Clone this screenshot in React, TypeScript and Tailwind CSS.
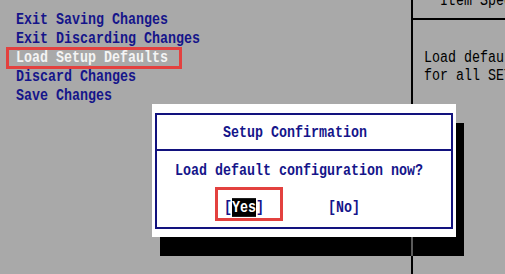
import React from "react";

const mono = { fontFamily: '"Liberation Mono", "DejaVu Sans Mono", monospace' };

function Line({ children, className = "" }: { children: React.ReactNode; className?: string }) {
  return (
    <div className={`h-[19px] leading-[19px] whitespace-pre scale-y-125 ${className}`}>{children}</div>
  );
}

export default function App() {
  return (
    <div
      className="relative w-[505px] h-[274px] overflow-hidden bg-[#a9a9a9] text-[13.333px] font-bold text-[#15158a] flex"
      style={mono}
    >
      {/* Left menu */}
      <div className="w-[411px] shrink-0 pt-[10px] pl-[16px] flex flex-col">
        <Line>Exit Saving Changes</Line>
        <Line>Exit Discarding Changes</Line>
        <Line className="text-[#f4f4f4]">Load Setup Defaults</Line>
        <Line>Discard Changes</Line>
        <Line>Save Changes</Line>
      </div>

      {/* Right help panel */}
      <div className="flex-1 border-l-2 border-black flex flex-col text-black font-normal">
        <div className="h-[20px] border-b-2 border-black overflow-hidden pl-[27px]">
          <div className="-mt-[9px] h-[19px] leading-[19px] whitespace-pre scale-y-125">Item Specific Help</div>
        </div>
        <div className="pt-[29px] pl-[11px] flex flex-col whitespace-pre">
          <div className="h-[18px] leading-[18px] scale-y-125">Load default values</div>
          <div className="h-[18px] leading-[18px] scale-y-125">for all SETUP items.</div>
        </div>
      </div>

      {/* Annotation around selected menu item */}
      <div className="absolute left-[6px] top-[47px] w-[176px] h-[22px] border-[3px] border-[#e3413f]" />

      {/* Dialog shadow */}
      <div className="absolute left-[160px] top-[123px] w-[304px] h-[133px] bg-black">
        <div className="absolute left-[251px] top-0 w-[2px] h-full bg-[#5a5a5a]" />
      </div>

      {/* Dialog */}
      <div className="absolute left-[152px] top-[104px] w-[304px] h-[133px] bg-white pt-[9px] pb-[8px] px-[3px] flex">
        <div className="flex-1 border-2 border-[#12127e] flex flex-col">
          <div className="h-[36px] border-b-2 border-[#12127e] flex items-center pl-[66px]">
            <Line>Setup Confirmation</Line>
          </div>
          <div className="pt-[10px] pl-[18px]">
            <Line>Load default configuration now?</Line>
          </div>
          <div className="pt-[18px] pl-[67px] flex gap-[64px]">
            <Line>
              [<span className="bg-black text-white">Yes</span>]
            </Line>
            <Line>[No]</Line>
          </div>
        </div>
      </div>

      {/* Annotation around Yes */}
      <div className="absolute left-[215px] top-[187px] w-[68px] h-[34px] border-[3px] border-[#e3413f]" />
    </div>
  );
}
